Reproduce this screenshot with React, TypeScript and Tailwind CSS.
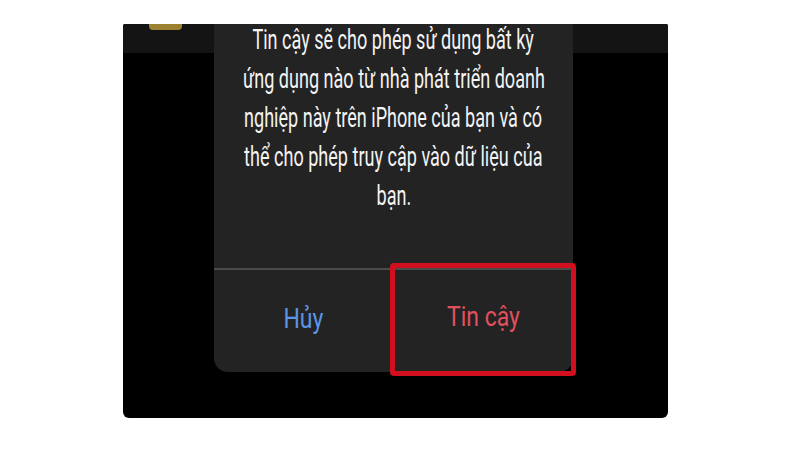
const lines = [
  "Tin cậy sẽ cho phép sử dụng bất kỳ",
  "ứng dụng nào từ nhà phát triển doanh",
  "nghiệp này trên iPhone của bạn và có",
  "thể cho phép truy cập vào dữ liệu của",
  "bạn.",
];

export default function App() {
  return (
    <div className="h-[450px] w-[800px] bg-white pl-[123px] pt-[24px] font-['Roboto',sans-serif]">
      <div className="flex h-[394px] w-[545px] overflow-hidden rounded-b-[6px] rounded-t-[2px] bg-black">
        {/* left side of the phone screen */}
        <div className="w-[91px] shrink-0">
          <div className="h-[29px] bg-[#141414] pl-[26px]">
            <div className="h-[6px] w-[33px] rounded-b-[4px] bg-[#9c8130]" />
          </div>
        </div>

        {/* alert */}
        <div className="flex h-[348px] w-[359px] shrink-0 flex-col rounded-b-[14px] bg-[#232323]">
          <div className="flex h-[244px] flex-col items-center">
            <div className="-mt-[4px] flex flex-col items-center">
              {lines.map((l) => (
                <p
                  key={l}
                  className="origin-center scale-x-[0.645] whitespace-nowrap text-[28px] leading-[39px] text-[#f4f4f4]"
                >
                  {l}
                </p>
              ))}
            </div>
          </div>
          <div className="h-[2px] bg-[#4b4b4b]" />
          <div className="relative flex flex-1">
            <button className="flex flex-1 items-center justify-center pb-[4px]">
              <span className="scale-x-[0.82] text-[28px] text-[#5b95e6]">Hủy</span>
            </button>
            <div className="w-px bg-[#3a3a3a]" />
            <button className="flex flex-1 items-center justify-center pb-[8px]">
              <span className="scale-x-[0.82] text-[28px] text-[#e2505f]">Tin cậy</span>
            </button>
            {/* red highlight around the confirm button */}
            <div className="absolute bottom-[-4px] left-[176px] right-[-3px] top-[-7px] rounded-[4px] border-[5px] border-[#d20f1f]" />
          </div>
        </div>

        {/* right side */}
        <div className="flex-1">
          <div className="h-[29px] bg-[#141414]" />
        </div>
      </div>
    </div>
  );
}
